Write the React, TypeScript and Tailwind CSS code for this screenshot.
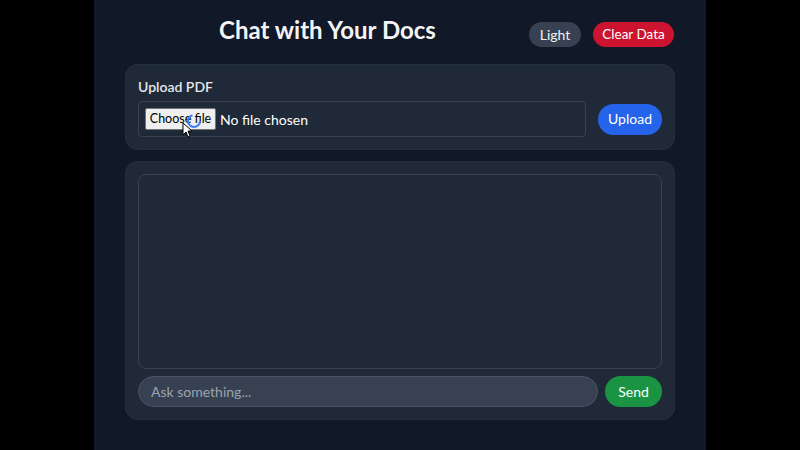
function Header() {
  return (
    <div className="flex items-start mb-[18px]">
      <h1 className="flex-1 text-center text-[24px] leading-8 font-bold text-[#f3f4f6]">
        Chat with Your Docs
      </h1>
      <div className="flex items-center gap-3 mt-2">
        <button className="w-[52px] h-[25px] flex items-center justify-center bg-[#374151] text-[#f3f4f6] text-sm rounded-full">
          Light
        </button>
        <button className="w-[81px] h-[25px] flex items-center justify-center bg-[#cc1431] text-white text-[13.5px] rounded-full">
          Clear Data
        </button>
      </div>
    </div>
  );
}

function UploadCard() {
  return (
    <div className="bg-[#1f2937] rounded-xl p-3 shadow-[0_0_0_1px_#243040]">
      <div className="text-sm leading-5 font-semibold text-[#e5e7eb] mb-1">
        Upload PDF
      </div>
      <div className="flex items-center gap-3">
        <div className="relative flex-1 h-[36px] flex items-center pl-[6px] border border-[#374151] rounded bg-[#1f2937]">
          <span className="w-[71px] h-[22px] flex items-center justify-center bg-[#efefef] border border-[#767676] rounded-[2px] text-[12.5px] text-black">
            Choose file
          </span>
          <span className="ml-[4px] text-[14px] text-white">No file chosen</span>
          {/* mouse cursor + busy ring */}
          <svg
            className="absolute left-[46px] top-[10px]"
            width="18"
            height="18"
            viewBox="0 0 18 18"
          >
            <circle cx="9" cy="9" r="6" fill="none" stroke="#3b82f6" strokeWidth="2" strokeDasharray="26 12" />
          </svg>
          <svg
            className="absolute left-[43px] top-[20px]"
            width="10"
            height="16"
            viewBox="0 0 10 16"
          >
            <path d="M1 1 L1 13 L4 10 L6 15 L8 14 L6 9 L10 9 Z" fill="white" stroke="black" strokeWidth="1" />
          </svg>
        </div>
        <button className="w-[64px] flex items-center justify-center bg-[#2563eb] text-white text-sm h-[31px] rounded-full">
          Upload
        </button>
      </div>
    </div>
  );
}

function ChatCard() {
  return (
    <div className="mt-[13px] bg-[#1f2937] rounded-xl p-3 shadow-[0_0_0_1px_#243040]">
      <div className="h-[195px] border border-[#374151] rounded-lg"></div>
      <div className="flex items-center gap-[7px] mt-[7px]">
        <input
          className="flex-1 h-[31px] rounded-full bg-[#374151] border border-[#4b5563] px-3 text-sm text-white placeholder:text-[#9ca3af] outline-none"
          placeholder="Ask something..."
        />
        <button className="w-[57px] flex items-center justify-center bg-[#1a9443] text-white text-sm h-[31px] rounded-full">
          Send
        </button>
      </div>
    </div>
  );
}

export default function App() {
  return (
    <div
      className="min-h-screen bg-black flex justify-center"
      style={{ fontFamily: "Lato, 'Noto Sans', sans-serif" }}
    >
      <div className="w-[612px] min-h-[450px] bg-[#111827] px-8 pt-[14px]">
        <Header />
        <UploadCard />
        <ChatCard />
      </div>
    </div>
  );
}
